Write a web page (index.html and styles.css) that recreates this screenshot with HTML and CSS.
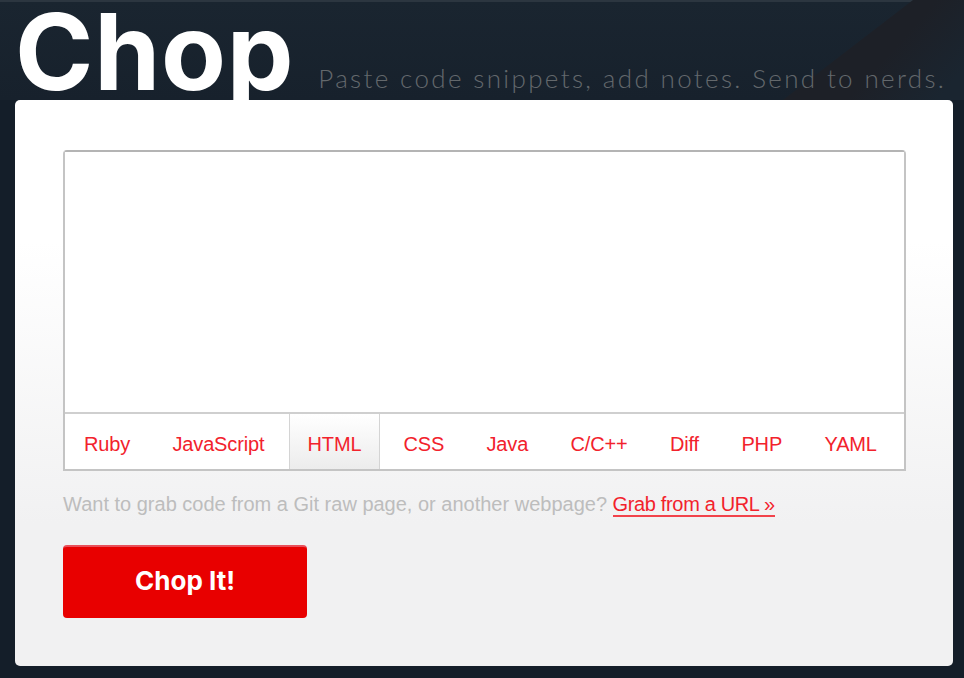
FILE: index.html
```html
<!DOCTYPE html>
<html lang="en">
<head>
  <meta charset="UTF-8" />
  <title>Chop</title>
  <link rel="stylesheet" href="styles.css">
</head>
<body>
  <header>
    <svg class="stripe" width="964" height="100" viewBox="0 0 964 100" aria-hidden="true">
      <defs>
        <linearGradient id="stripeFade" x1="0.55" y1="0.6" x2="0.95" y2="0.8">
          <stop offset="0" stop-color="#1d2027" />
          <stop offset="1" stop-color="#1a2530" />
        </linearGradient>
      </defs>
      <polygon points="783,100 913,0 964,0 964,100" fill="url(#stripeFade)" />
    </svg>
    <h1 class="logo">Chop</h1>
    <p class="tagline">Paste code snippets, add notes. Send to nerds.</p>
  </header>

  <main class="card">
    <form>
      <div class="editor">
        <textarea aria-label="Code"></textarea>
        <ul class="langs">
          <li><a href="#">Ruby</a></li>
          <li><a href="#">JavaScript</a></li>
          <li class="active"><a href="#">HTML</a></li>
          <li><a href="#">CSS</a></li>
          <li><a href="#">Java</a></li>
          <li><a href="#">C/C++</a></li>
          <li><a href="#">Diff</a></li>
          <li><a href="#">PHP</a></li>
          <li><a href="#">YAML</a></li>
        </ul>
      </div>
      <p class="hint">Want to grab code from a Git raw page, or another webpage? <a href="#">Grab from a URL »</a></p>
      <button type="submit" class="chop-btn">Chop It!</button>
    </form>
  </main>
</body>
</html>
```

FILE: styles.css
```css
body {
  margin: 0;
  height: 678px;
  overflow: hidden;
  font-family: "Liberation Sans", Arial, sans-serif;
  background-color: #141e29;
}

header {
  position: relative;
  height: 100px;
  display: flex;
  align-items: flex-start;
  padding-left: 15px;
  border-top: 2px solid #2c3640;
  box-sizing: border-box;
  background: linear-gradient(#1a2530, #17212c);
}

.stripe {
  position: absolute;
  top: -2px;
  left: 0;
}

.logo {
  position: relative;
  z-index: 1;
  margin: 2px 0 0;
  font-family: Inter, sans-serif;
  font-weight: 700;
  font-size: 106px;
  line-height: 95px;
  letter-spacing: 0.75px;
  color: white;
}

.tagline {
  position: relative;
  margin: 61px 0 0 24px;
  font-family: Lato, sans-serif;
  font-weight: 300;
  font-size: 26px;
  line-height: 30px;
  letter-spacing: 2.35px;
  white-space: nowrap;
  color: #63686c;
}

.card {
  width: 938px;
  height: 566px;
  margin-left: 15px;
  padding: 50px 47px 0 48px;
  box-sizing: border-box;
  border-radius: 5px;
  background: linear-gradient(#ffffff 0%, #ffffff 25%, #f1f1f2 75%);
}

.editor {
  height: 321px;
  display: flex;
  flex-direction: column;
  border: 2px solid #c4c4c4;
  border-top-color: #b4b4b4;
  border-radius: 4px 4px 0 0;
  box-sizing: border-box;
  background: white;
}

.editor textarea {
  flex: 1;
  display: block;
  border: none;
  outline: none;
  resize: none;
  background: white;
}

.langs {
  height: 57px;
  display: flex;
  margin: 0;
  padding: 0;
  list-style: none;
  border-top: 2px solid #cfcfcf;
  box-sizing: border-box;
}

.langs li {
  display: flex;
  align-items: center;
  padding: 5px 21.2px 0;
  font-size: 20px;
  letter-spacing: -0.15px;
}

.langs li:first-child {
  padding-left: 19px;
}

.langs li.active {
  padding: 5px 17.5px 0 18px;
  margin-left: 3px;
  margin-right: 2.4px;
  border-left: 1px solid #d4d4d4;
  border-right: 1px solid #d4d4d4;
  background: linear-gradient(#ffffff, #ececec);
}

.langs a {
  color: #f2222c;
  text-decoration: none;
}

.hint {
  margin: 21px 0 0;
  font-size: 20px;
  line-height: 24px;
  color: #bdbdbd;
}

.hint a {
  color: #f2222c;
  letter-spacing: -0.35px;
  text-decoration: none;
  border-bottom: 2px solid #f2434b;
}

.chop-btn {
  display: block;
  width: 244px;
  height: 73px;
  margin-top: 29px;
  padding-bottom: 5px;
  border: none;
  border-top: 2px solid #e8505a;
  border-radius: 4px;
  background: #e80000;
  color: white;
  font-family: Inter, sans-serif;
  font-weight: 700;
  font-size: 26px;
}
```
